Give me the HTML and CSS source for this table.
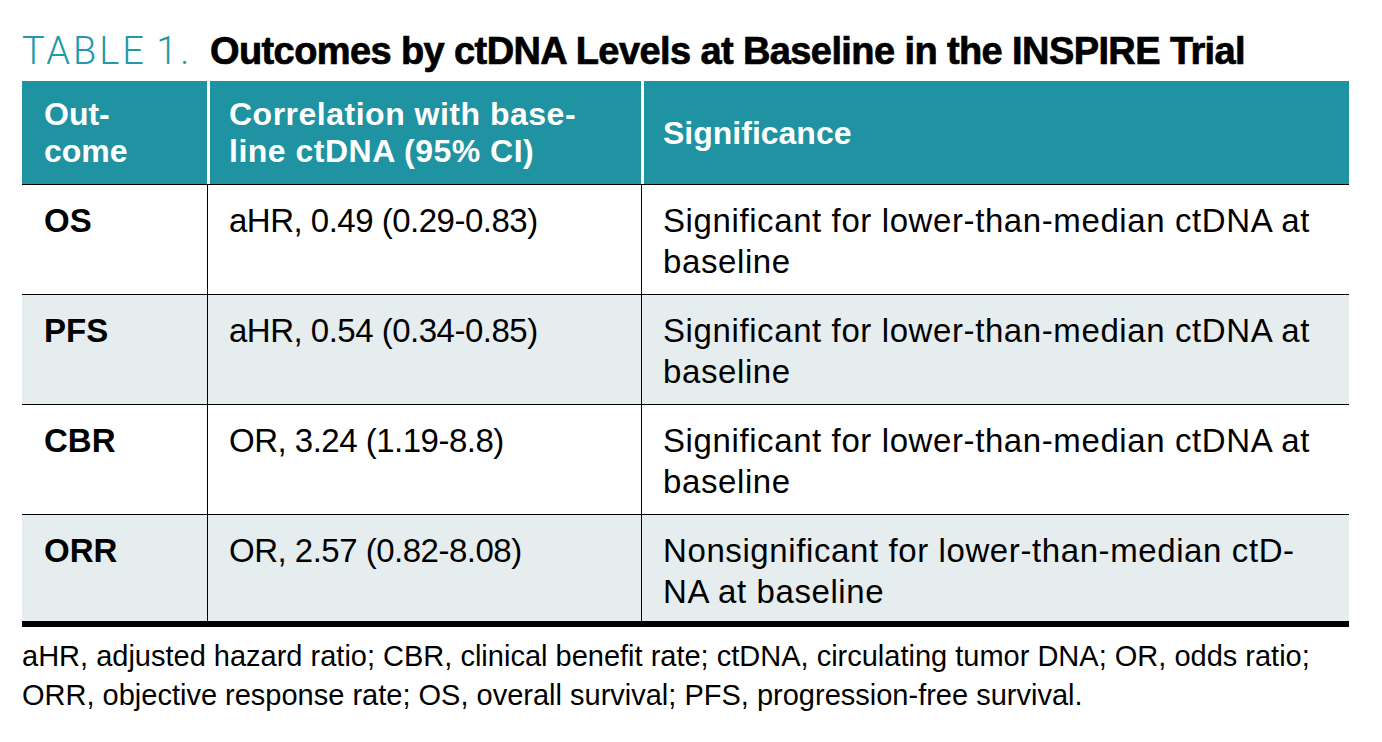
FILE: index.html
```html
<!DOCTYPE html>
<html lang="en">
<head>
<meta charset="utf-8">
<title>Table 1</title>
<link rel="stylesheet" href="styles.css">
</head>
<body>
<div class="page">
  <h1 class="title"><span class="label">TABLE 1.</span><span class="heading">Outcomes by ctDNA Levels at Baseline in the INSPIRE Trial</span></h1>
  <div class="table">
    <div class="row head">
      <div class="cell">Out-<br>come</div>
      <div class="cell">Correlation with base-<br>line ctDNA (95% CI)</div>
      <div class="cell">Significance</div>
    </div>
    <div class="row">
      <div class="cell key">OS</div>
      <div class="cell val">aHR, 0.49 (0.29-0.83)</div>
      <div class="cell sig">Significant for lower-than-median ctDNA at<br>baseline</div>
    </div>
    <div class="row alt">
      <div class="cell key">PFS</div>
      <div class="cell val">aHR, 0.54 (0.34-0.85)</div>
      <div class="cell sig">Significant for lower-than-median ctDNA at<br>baseline</div>
    </div>
    <div class="row">
      <div class="cell key">CBR</div>
      <div class="cell val">OR, 3.24 (1.19-8.8)</div>
      <div class="cell sig">Significant for lower-than-median ctDNA at<br>baseline</div>
    </div>
    <div class="row alt last">
      <div class="cell key">ORR</div>
      <div class="cell val">OR, 2.57 (0.82-8.08)</div>
      <div class="cell sig">Nonsignificant for lower-than-median ctD-<br>NA at baseline</div>
    </div>
  </div>
  <p class="note">aHR, adjusted hazard ratio; CBR, clinical benefit rate; ctDNA, circulating tumor DNA; OR, odds ratio;<br>ORR, objective response rate; OS, overall survival; PFS, progression-free survival.</p>
</div>
</body>
</html>
```

FILE: styles.css
```css
* { box-sizing: border-box; }

html, body {
  margin: 0;
  padding: 0;
  background: #ffffff;
}

body {
  font-family: "Liberation Sans", Arial, sans-serif;
  color: #000;
}

.page {
  padding: 29px 0 0 22px;
  width: 1349px;
}

.title {
  margin: 0 0 8px 0;
  display: flex;
  align-items: baseline;
  height: 44px;
  line-height: 44px;
  white-space: nowrap;
}

.label {
  font-family: Roboto, "Liberation Sans", sans-serif;
  font-weight: 300;
  font-size: 38px;
  color: #2399a8;
  letter-spacing: 3px;
  word-spacing: -3px;
  width: 188px;
}

.heading {
  font-family: "Liberation Sans", sans-serif;
  font-weight: 700;
  font-size: 38px;
  letter-spacing: -0.6px;
  color: #000;
  -webkit-text-stroke: 0.7px #000;
}

.table {
  width: 1327px;
}

.row {
  display: grid;
  grid-template-columns: 185px 434px 708px;
  border-bottom: 1px solid #000;
}

.row.alt {
  background: #e6edef;
}

.row.last {
  border-bottom: 6px solid #000;
}

.cell {
  padding: 15px 20px 12px 22px;
  font-size: 33px;
  line-height: 41px;
}

.row.last .cell {
  padding-bottom: 9px;
}

.cell + .cell {
  border-left: 1px solid #000;
  padding-left: 21px;
}

.cell.key {
  font-weight: 700;
}

.cell.val {
  letter-spacing: -0.5px;
}

.cell.sig {
  letter-spacing: 0.6px;
}

.row.head {
  background: #1f93a1;
  color: #fff;
}

.row.head .cell {
  font-weight: 700;
  font-size: 32px;
  line-height: 37px;
  padding: 15px 16px 14px 22px;
  display: flex;
  align-items: center;
}

.row.head .cell + .cell {
  border-left: 3px solid #fff;
  padding-left: 19px;
}

.row.head .cell:nth-child(2) {
  letter-spacing: 0.5px;
}

.note {
  margin: 10px 0 0 0;
  font-size: 29px;
  line-height: 39px;
  white-space: nowrap;
}
```
